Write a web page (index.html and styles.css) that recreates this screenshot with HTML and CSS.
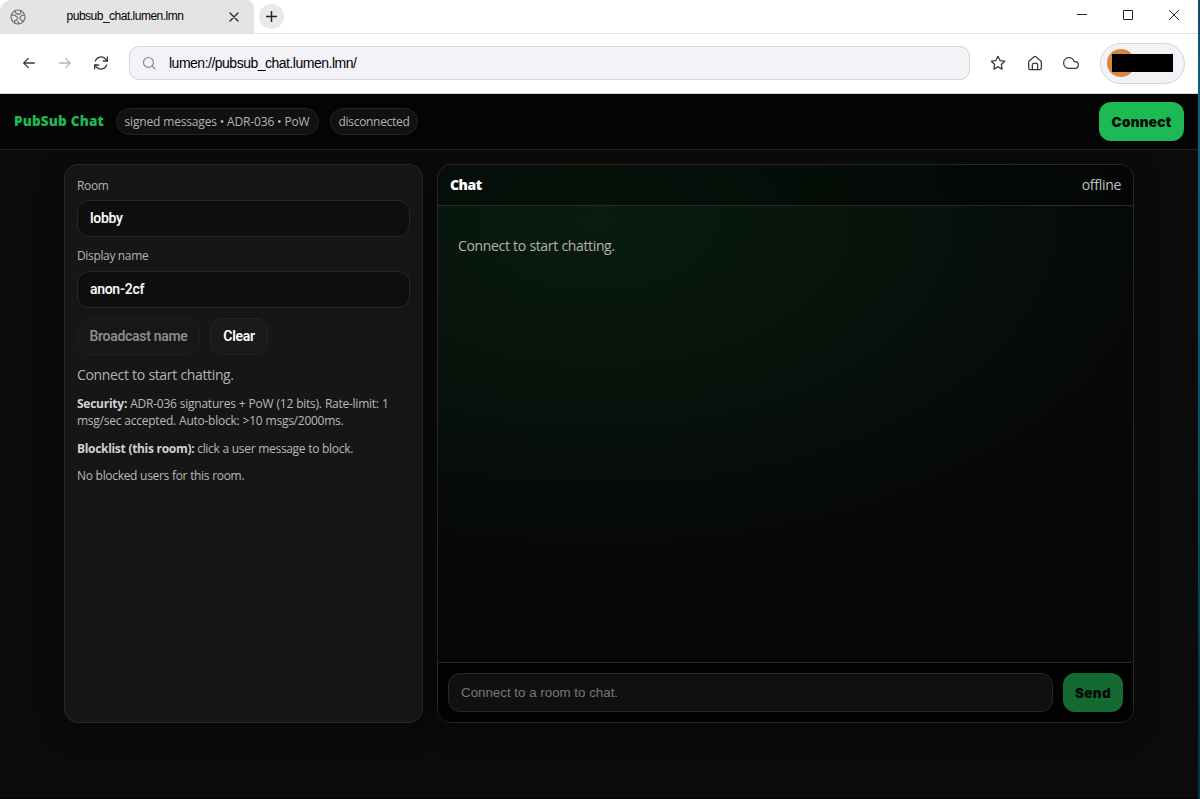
FILE: index.html
```
<!DOCTYPE html>
<html lang="en">
<head>
    <meta charset="UTF-8">
    <meta name="viewport" content="width=device-width, initial-scale=1.0">
    <title>PubSub Chat</title>
    <link rel="stylesheet" href="styles.css">
</head>
<body>
    <div class="window">
        <div class="tabbar">
            <div class="tab">
                <svg class="tab-icon" viewBox="0 0 24 24"><circle cx="12" cy="12" r="10.5"/><path d="M2 9.500l5-.5 4 3.500-.5 4-3.500 1v3.500M7 3l2.500 4 4 1L16 6V2.500M22 9l-4.500.5-3 3.500 2 3.500 3.500 2M13 22l-1-3.500"/></svg>
                <span class="tab-title">pubsub_chat.lumen.lmn</span>
                <svg class="tab-close" viewBox="0 0 10 10"><path d="M1 1l8 8M9 1l-8 8"/></svg>
            </div>
            <button class="new-tab" aria-label="New tab"><svg viewBox="0 0 12 12"><path d="M6 .5v11M.5 6h11"/></svg></button>
            <div class="window-controls">
                <svg viewBox="0 0 12 12"><path d="M1 5.500h10"/></svg>
                <svg viewBox="0 0 12 12"><path d="M1.500 1.500h9v9h-9z"/></svg>
                <svg viewBox="0 0 12 12"><path d="M1 1l10 10M11 1L1 11"/></svg>
            </div>
        </div>

        <div class="toolbar">
            <div class="nav">
                <svg viewBox="0 0 24 24"><path d="M20 12H4M11 5l-7 7 7 7"/></svg>
                <svg class="off" viewBox="0 0 24 24"><path d="M4 12h16M13 5l7 7-7 7"/></svg>
                <svg viewBox="0 0 24 24"><path d="M21.500 3v6h-6M2.500 21v-6h6"/><path d="M3.500 9a9 9 0 0 1 15-3.400l3 3.400M2.500 15l3 3.400A9 9 0 0 0 20.500 15"/></svg>
            </div>
            <div class="address">
                <svg viewBox="0 0 24 24"><circle cx="11" cy="11" r="8.500"/><path d="M17.500 17.500L22 22"/></svg>
                <span>lumen://pubsub_chat.lumen.lmn/</span>
            </div>
            <div class="actions">
                <svg viewBox="0 0 24 24"><path d="M12 2l3.100 6.300 6.900 1-5 4.900 1.200 6.900L12 17.800l-6.200 3.300L7 14.200 2 9.300l6.900-1z"/></svg>
                <svg viewBox="0 0 24 24"><path d="M2.500 10.500a2 2 0 0 1 .7-1.500l7.500-6.500a2 2 0 0 1 2.600 0l7.500 6.500a2 2 0 0 1 .7 1.500V20a2 2 0 0 1-2 2h-15a2 2 0 0 1-2-2z"/><path d="M8 22v-7.500a2 2 0 0 1 2-2h4a2 2 0 0 1 2 2V22"/></svg>
                <svg viewBox="0 0 24 24"><path d="M18 10h-1.260A8 8 0 1 0 9 20h9a5 5 0 0 0 0-10z"/></svg>
            </div>
            <div class="profile">
                <span class="avatar"></span>
                <span class="redacted"></span>
            </div>
        </div>

        <div class="page">
            <header class="topbar">
                <h1>PubSub Chat</h1>
                <span class="pill pill-info">signed messages • ADR-036 • PoW</span>
                <span class="pill pill-status">disconnected</span>
                <button class="btn-primary connect">Connect</button>
            </header>

            <main class="layout">
                <aside class="card sidebar">
                    <label for="room">Room</label>
                    <input type="text" id="room" value="lobby">
                    <label for="name">Display name</label>
                    <input type="text" id="name" value="anon-2cf">
                    <div class="button-row">
                        <button class="btn" disabled>Broadcast name</button>
                        <button class="btn clear">Clear</button>
                    </div>
                    <p class="status">Connect to start chatting.</p>
                    <p class="note security"><b>Security:</b> ADR-036 signatures + PoW (12 bits). Rate-limit: 1<br>msg/sec accepted. Auto-block: &gt;10 msgs/2000ms.</p>
                    <p class="note"><b>Blocklist (this room):</b> click a user message to block.</p>
                    <p class="note">No blocked users for this room.</p>
                </aside>

                <section class="card chat">
                    <div class="chat-header">
                        <h2>Chat</h2>
                        <span>offline</span>
                    </div>
                    <div class="messages">
                        <p class="status">Connect to start chatting.</p>
                    </div>
                    <div class="composer">
                        <input type="text" placeholder="Connect to a room to chat." disabled>
                        <button class="btn-primary" disabled>Send</button>
                    </div>
                </section>
            </main>
        </div>
    </div>
</body>
</html>
```

FILE: styles.css
```
:root {
    --green: #1db954;
    --bg: #0b0b0b;
    --card: #161616;
    --field: #0e0e0e;
    --line: #272827;
    --muted: #b3b3b3;
    --ui: "Open Sans", "Noto Sans", sans-serif;
    --control: "Liberation Sans", Arial, sans-serif;
}

* {
    box-sizing: border-box;
}

body {
    margin: 0;
    height: 799px;
    padding-right: 2px;
    background: linear-gradient(#174665, #0b657c 12%, #07546b 50%, #03333f);
    font-family: var(--ui);
    overflow: hidden;
}

h1, h2, p {
    margin: 0;
}

svg {
    fill: none;
    stroke: #3b3b3f;
    stroke-linecap: round;
    stroke-linejoin: round;
    flex: none;
}

.window {
    height: 100%;
    display: flex;
    flex-direction: column;
    background: #fff;
}

/* browser chrome */
.tabbar {
    height: 34px;
    display: flex;
    align-items: center;
    border-bottom: 1px solid #e2e0df;
}

.tab {
    width: 254px;
    height: 33px;
    display: flex;
    align-items: center;
    padding: 0 15px 0 10px;
    background: #e4e4e4;
    border-radius: 12px 8px 0 0;
}

.tab-icon {
    width: 16px;
    height: 16px;
    stroke: #6c6c6c;
    stroke-width: 1.7;
}

.tab-title {
    flex: 1;
    padding: 0 5px 1px 0;
    text-align: center;
    font-family: var(--control);
    font-size: 12px;
    letter-spacing: -0.5px;
    color: #000;
}

.tab-close {
    width: 10px;
    height: 10px;
    stroke: #222;
    stroke-width: 1.3;
}

.new-tab {
    width: 25px;
    height: 25px;
    margin-left: 5px;
    padding: 0;
    border: none;
    border-radius: 50%;
    background: #e9e9e9;
    display: grid;
    place-items: center;
}

.new-tab svg {
    width: 11px;
    height: 11px;
    stroke: #222;
    stroke-width: 1.6;
}

.window-controls {
    display: flex;
    gap: 34px;
    margin-left: auto;
    padding: 0 18px 3px 0;
}

.window-controls svg {
    width: 12px;
    height: 12px;
    stroke: #26263a;
    stroke-linecap: butt;
    stroke-linejoin: miter;
}

.toolbar {
    height: 60px;
    display: flex;
    align-items: center;
    padding: 0 13px 1px 21px;
    border-bottom: 1px solid #d5d5d5;
}

.nav {
    display: flex;
    gap: 20px;
    width: 109px;
    padding-bottom: 1px;
}

.nav svg {
    width: 16px;
    height: 16px;
    stroke-width: 1.9;
}

.nav .off {
    stroke: #b8b8b8;
}

.address {
    width: 841px;
    height: 34px;
    display: flex;
    align-items: center;
    gap: 13px;
    margin-left: -1px;
    padding-left: 12px;
    border: 1px solid #d3d3d8;
    border-radius: 10px;
    background: #f2f2f7;
    font-family: var(--control);
    font-size: 14px;
    letter-spacing: -0.5px;
    color: #000;
}

.address svg {
    width: 14px;
    height: 14px;
    stroke: #85858b;
    stroke-width: 2;
}

.actions {
    display: flex;
    gap: 20.500px;
    margin-left: 20px;
    padding-bottom: 1px;
}

.actions svg {
    width: 16px;
    height: 16px;
    stroke-width: 1.9;
}

.profile {
    position: relative;
    width: 85px;
    height: 41px;
    margin-left: auto;
    border: 1px solid #d3d3d8;
    border-radius: 21px;
    background: #f2f2f7;
}

.avatar {
    position: absolute;
    top: 5px;
    left: 6px;
    width: 28px;
    height: 28px;
    border-radius: 50%;
    background: #d48941;
}

.redacted {
    position: absolute;
    top: 10px;
    left: 11px;
    width: 61px;
    height: 18px;
    background: #000;
}

/* chat page */
.page {
    flex: 1;
    background: var(--bg);
    border-bottom: 1px solid #030303;
}

.topbar {
    height: 56px;
    display: flex;
    align-items: center;
    padding: 0 14px;
    background: #040404;
    border-bottom: 1px solid #242424;
}

.topbar h1 {
    width: 102px;
    padding-bottom: 1px;
    color: var(--green);
    font-size: 13.500px;
    font-weight: 800;
    letter-spacing: 0.2px;
    white-space: nowrap;
}

.pill {
    height: 27px;
    padding: 0 7.500px;
    border: 1px solid #252525;
    border-radius: 14px;
    background: #111;
    color: var(--muted);
    font-size: 12px;
    line-height: 25px;
    letter-spacing: -0.16px;
    white-space: nowrap;
}

.pill-info {
    width: 203px;
    margin-right: 11px;
}

.pill-status {
    width: 88px;
    letter-spacing: -0.3px;
}

.btn-primary {
    height: 39px;
    padding: 0;
    border: none;
    border-radius: 12px;
    background: var(--green);
    color: #040804;
    font-family: Inter, sans-serif;
    font-size: 13.500px;
    font-weight: 900;
    letter-spacing: 0.3px;
}

.btn-primary:disabled {
    background: #146b32;
    color: #020703;
}

.connect {
    width: 85px;
    margin-left: auto;
}

.layout {
    width: 1070px;
    height: 559px;
    margin: 14px auto 0;
    display: grid;
    grid-template-columns: 359px 1fr;
    gap: 14px;
}

.card {
    border: 1px solid var(--line);
    border-radius: 14px;
    box-shadow: 0 8px 24px rgba(0, 0, 0, 0.35);
}

.sidebar {
    padding: 12px;
    background: var(--card);
}

.sidebar label {
    display: block;
    height: 17px;
    margin-bottom: 6px;
    color: var(--muted);
    font-size: 12px;
    line-height: 17px;
    letter-spacing: -0.35px;
}

.sidebar input + label {
    margin-bottom: 7px;
}

input {
    display: block;
    width: 100%;
    height: 37px;
    padding: 0 12px 2px;
    border: 1px solid var(--line);
    border-radius: 12px;
    background: var(--field);
    color: #f5f5f5;
    font-family: Roboto, var(--control);
    font-size: 14px;
    font-weight: 600;
    letter-spacing: -0.3px;
    outline: none;
}

.sidebar input {
    margin-bottom: 10px;
}

.button-row {
    display: flex;
    gap: 10px;
}

.btn {
    width: 123px;
    height: 37px;
    padding: 0 0 2px;
    border: 1px solid #242424;
    border-radius: 12px;
    background: #1a1a1a;
    color: #fff;
    font-family: Roboto, var(--control);
    font-size: 14px;
    font-weight: 600;
    letter-spacing: -0.3px;
}

.btn:disabled {
    border-color: #1d1d1d;
    background: #171717;
    color: #8b8b8b;
}

.clear {
    width: 58px;
}

.status {
    color: var(--muted);
    font-size: 14px;
    line-height: 20px;
    letter-spacing: -0.35px;
    word-spacing: 0.3px;
}

.sidebar .status {
    margin: 10px 0;
}

.note {
    color: #b9b9b9;
    font-size: 12px;
    line-height: 17px;
    letter-spacing: -0.32px;
    word-spacing: 0.2px;
    margin-bottom: 10px;
    white-space: nowrap;
}

.security {
    letter-spacing: -0.25px;
    word-spacing: 0.3px;
    margin-bottom: 11px;
}

.note b {
    color: #d2d2d2;
}

.chat {
    display: flex;
    flex-direction: column;
    overflow: hidden;
    background: radial-gradient(660px 380px at 23% 10%, rgba(29, 185, 84, 0.12), transparent), #060606;
}

.chat-header {
    height: 41px;
    display: flex;
    justify-content: space-between;
    align-items: center;
    padding: 0 12px 1px;
    border-bottom: 1px solid var(--line);
    background: rgba(0, 0, 0, 0.35);
    color: #c0c0c0;
    font-size: 14px;
    letter-spacing: -0.3px;
}

.chat-header h2 {
    color: #fff;
    font-size: 14px;
    font-weight: 800;
    letter-spacing: -0.5px;
}

.messages {
    flex: 1;
    padding: 30px 20px;
}

.composer {
    height: 60px;
    display: flex;
    gap: 10px;
    padding: 10px;
    border-top: 1px solid var(--line);
    background: #020202;
}

.composer input {
    flex: 1;
    height: 39px;
    padding-bottom: 1px;
    background: #101010;
    font-family: var(--control);
    font-size: 13.333px;
    font-weight: 400;
    letter-spacing: normal;
}

.composer input::placeholder {
    color: #777;
}

.composer button {
    width: 60px;
}
```
